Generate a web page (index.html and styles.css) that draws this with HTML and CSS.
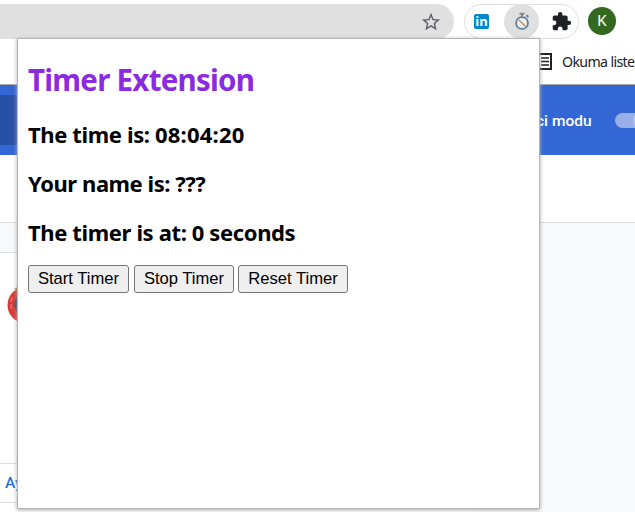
FILE: index.html
```html
<!DOCTYPE html>
<html lang="tr">
<head>
<meta charset="utf-8">
<title>Timer Extension</title>
<link rel="stylesheet" href="styles.css">
</head>
<body>
<div class="browser">
  <header class="toolbar">
    <div class="address">
      <svg width="22" height="22" viewBox="0 0 24 24" fill="#5f6368"><path d="M22 9.24l-7.19-.62L12 2 9.19 8.63 2 9.24l5.46 4.73L5.82 21 12 17.27 18.18 21l-1.63-7.03L22 9.24zM12 15.4l-3.76 2.27 1-4.28-3.32-2.88 4.38-.38L12 6.1l1.71 4.04 4.38.38-3.32 2.88 1 4.28L12 15.4z"/></svg>
    </div>
    <div class="extensions">
      <span class="linkedin">in</span>
      <span class="active-extension">
        <svg width="18" height="19" viewBox="0 0 18 19" fill="none">
          <path d="M6.500 1.700h5M9 1.500v3" stroke="#8c8984" stroke-width="2"/>
          <path d="M13.4 3.3l2 1.8" stroke="#777b80" stroke-width="2"/>
          <circle cx="9" cy="11" r="6" fill="#f1eee8" stroke="#587a9a" stroke-width="1.6"/>
          <path d="M5.8 7.8l6.4 6.4" stroke="#a4776a" stroke-width="1.2"/>
          <path d="M9 6v1M9 15v1M4 11h1M13 11h1" stroke="#d9bd8e"/>
        </svg>
      </span>
      <svg class="puzzle" width="21" height="21" viewBox="0 0 24 24" fill="#202124"><path d="M20.5 11H19V7c0-1.1-.9-2-2-2h-4V3.5a2.5 2.5 0 0 0-5 0V5H4c-1.1 0-2 .9-2 2v3.8h1.5a2.7 2.7 0 0 1 0 5.4H2V20c0 1.100.9 2 2 2h3.800v-1.500a2.700 2.700 0 0 1 5.400 0V22H17c1.100 0 2-.9 2-2v-4h1.500a2.500 2.500 0 0 0 0-5z"/></svg>
    </div>
    <span class="avatar">K</span>
  </header>
  <div class="bookmarks">
    <svg class="list-icon" width="18" height="18" viewBox="0 0 18 18" fill="none" stroke="#202124"><path d="M1 1h15v15H1z" stroke-width="2"/><path d="M3 5h2M6 5h8M3 8.500h2M6 8.500h8M3 12h2M6 12h8" stroke-width="1.500"/></svg>
    <span class="reading">Okuma liste</span>
  </div>
  <div class="banner">
    <div class="search"></div>
    <span class="mode">ci modu</span>
    <span class="switch"><i class="knob"></i></span>
  </div>
  <div class="subbar"></div>
  <main class="content">
    <section class="card">
      <div class="card-body">
        <svg width="42" height="42" viewBox="0 0 42 42"><path d="M7 5l7-4v6z" fill="#65a34b"/><circle cx="19" cy="21" r="18.500" fill="#d83b36"/><path d="M5 13q-2 7 0 14" fill="none" stroke="#e9635d" stroke-width="2" stroke-dasharray="5 2"/><circle cx="20" cy="20" r="11" fill="#e0e5ed" stroke="#39455c" stroke-width="3"/></svg>
      </div>
      <div class="card-footer">Ayrıntılar</div>
      <div class="card-gap"></div>
    </section>
  </main>
</div>
<section class="popup">
  <h1 class="title">Timer Extension</h1>
  <h2 class="line">The time is: <span class="clock">08:04:20</span></h2>
  <h2 class="line name">Your name is: ???</h2>
  <h2 class="line">The timer is at: 0 seconds</h2>
  <div class="actions">
    <button class="start">Start Timer</button>
    <button class="stop">Stop Timer</button>
    <button class="reset">Reset Timer</button>
  </div>
</section>
</body>
</html>
```
FILE: styles.css
```css
* { box-sizing: border-box; }
body { margin: 0; width: 635px; height: 512px; overflow: hidden; background: #fff; font-family: "Noto Sans", sans-serif; }
.browser { height: 512px; display: flex; flex-direction: column; overflow: hidden; }
.toolbar { height: 39px; flex: none; display: flex; padding-top: 4px; }
.address { width: 454px; height: 35px; background: #e0e0e0; border-radius: 0 18px 18px 0; display: flex; justify-content: flex-end; align-items: center; padding-right: 12px; }
.extensions { width: 115px; height: 35px; margin-left: 10px; border: 1px solid #dfe0e2; border-radius: 18px; display: flex; align-items: center; }
.linkedin { width: 15px; height: 15px; margin-left: 9px; border-radius: 2px; background: #0288d1; color: #fff; font: bold 13px/14px "Open Sans", sans-serif; text-align: center; }
.active-extension { width: 35px; height: 35px; margin-left: 15px; border-radius: 50%; background: #e0e0e0; display: flex; align-items: center; justify-content: center; }
.puzzle { margin-left: 12px; }
.avatar { width: 28px; height: 28px; margin: 3px 0 0 9px; border-radius: 50%; background: #33691e; color: #fff; font: 15px/29px Roboto, sans-serif; text-align: center; }
.bookmarks { height: 46px; flex: none; border-bottom: 1px solid #aaa; display: flex; align-items: center; padding-left: 535px; }
.list-icon { flex: none; }
.reading { margin-left: 9px; color: #202124; font-size: 14.2px; letter-spacing: -0.65px; white-space: nowrap; }
.banner { height: 70px; flex: none; background: #3367d6; display: flex; align-items: center; }
.search { width: 450px; height: 50px; flex: none; background: #2850a7; }
.mode { width: 79px; flex: none; margin: 2px 0 0 86px; color: #fff; font: 500 15.5px/20px Roboto, sans-serif; white-space: nowrap; }
.switch { width: 34px; height: 15px; flex: none; border-radius: 8px; background: #98afe9; }
.knob { display: block; width: 20px; height: 20px; margin: -2px 0 0 18px; border-radius: 50%; background: #b5c5ef; }
.subbar { height: 68px; flex: none; border-bottom: 1px solid #dadce0; }
.content { height: 289px; background: #f8f9fa; padding-top: 29px; }
.card { width: 475px; height: 260px; background: #fff; border-top: 1px solid #dadce0; }
.card-body { height: 210px; padding: 31px 0 0 7px; }
.card-footer { height: 40px; border-top: 1px solid #dadce0; border-bottom: 1px solid #dadce0; padding-left: 5px; color: #1a73e8; font: 500 15.5px/38px Roboto, sans-serif; }
.card-gap { height: 9px; }
.popup { position: absolute; left: 18px; top: 39px; width: 521px; height: 469px; padding: 19px 10px; background: #fff; box-shadow: 0 0 0 1px #b5b5b5, 0 1px 4px 1px #aaa; }
.title { margin: 0; height: 44px; color: #8a2be2; font-size: 29.500px; line-height: 44px; letter-spacing: -0.75px; white-space: nowrap; }
.line { margin: 16px 0 0; height: 33px; font-size: 22px; line-height: 33px; letter-spacing: -0.37px; white-space: nowrap; }
.clock { letter-spacing: 0.2px; }
.name { letter-spacing: -0.45px; }
.actions { margin-top: 16px; display: flex; }
button { height: 28px; padding: 0; border: 1px solid #767676; border-radius: 3px; background: #efefef; color: #000; font: 16.6px/24px "Liberation Sans", sans-serif; white-space: nowrap; }
.start { width: 101px; }
.stop { width: 100px; margin-left: 5px; }
.reset { width: 110px; margin-left: 4px; }
```
